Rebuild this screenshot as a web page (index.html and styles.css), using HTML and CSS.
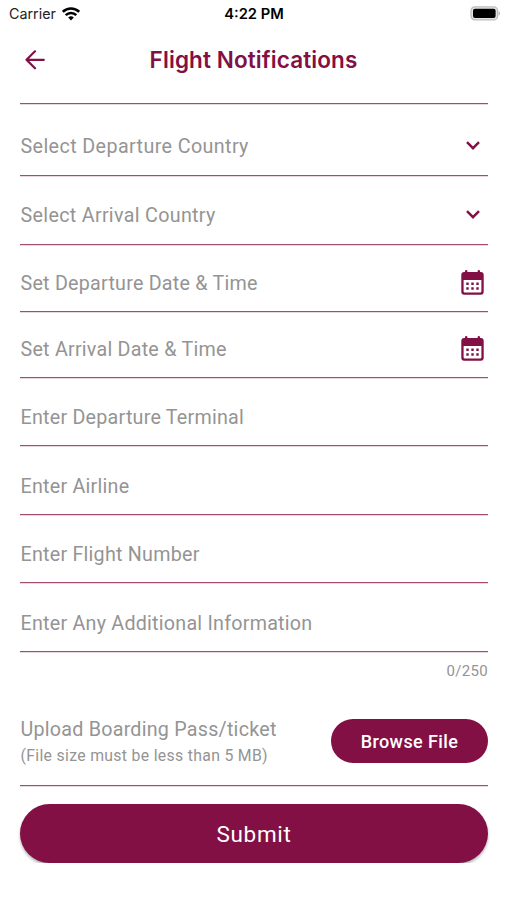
FILE: index.html
```html
<!DOCTYPE html>
<html lang="en">
<head>
  <meta charset="UTF-8">
  <meta name="viewport" content="width=device-width, initial-scale=1.0">
  <title>Flight Notifications</title>
  <link rel="stylesheet" href="styles.css">
</head>
<body>
  <div class="status-bar">
    <div class="carrier">
      <span>Carrier</span>
      <svg width="18" height="14" viewBox="0 0 18 14" fill="none" stroke="#000" stroke-width="2.6">
        <path d="M.8 4.800a11.800 11.800 0 0 1 16.400 0"/>
        <path d="M3.700 8.100a7.600 7.600 0 0 1 10.600 0"/>
        <path d="M9 13.400L6.200 10.600a4 4 0 0 1 5.600 0z" fill="#000" stroke="none"/>
      </svg>
    </div>
    <span class="time">4:22 PM</span>
    <svg class="battery" width="31" height="15" viewBox="0 0 31 15">
      <rect x="1" y="0.9" width="26.600" height="13" rx="4" fill="#e4e4e4" stroke="#bdbdbd" stroke-width="1.3"/>
      <rect x="3" y="2.800" width="22.600" height="9.200" rx="2" fill="#000"/>
      <path d="M28.600 5.200c1.900.7 1.900 3.700 0 4.400z" fill="#b5b5b5"/>
    </svg>
  </div>

  <header class="header">
    <svg class="back" width="20" height="20" viewBox="0 0 20 20" fill="none" stroke="#821045" stroke-width="2.200" stroke-linecap="round" stroke-linejoin="round">
      <path d="M18.800 9.800H1.500M10 1.300L1.500 9.800l8.500 8.500"/>
    </svg>
    <h1>Flight Notifications</h1>
  </header>

  <form class="form">
    <div class="field country">
      <span>Select Departure Country</span>
      <svg class="chevron" width="14" height="9" viewBox="0 0 14 9" fill="none" stroke="#821045" stroke-width="2.4"><path d="M1 1.200l6 6 6-6"/></svg>
    </div>
    <div class="field arrival">
      <span>Select Arrival Country</span>
      <svg class="chevron" width="14" height="9" viewBox="0 0 14 9" fill="none" stroke="#821045" stroke-width="2.4"><path d="M1 1.200l6 6 6-6"/></svg>
    </div>
    <div class="field date">
      <span>Set Departure Date &amp; Time</span>
      <svg class="calendar" width="23" height="25" viewBox="0 0 23 25">
        <path fill="#821045" fill-rule="evenodd" d="M4 2V1.200a1.200 1.200 0 0 1 2.400 0V2h10.200v-.8a1.200 1.200 0 0 1 2.400 0V2h.8A2.900 2.900 0 0 1 22.700 4.900v16.900a2.900 2.900 0 0 1-2.900 2.900H3.200A2.900 2.900 0 0 1 .3 21.800V4.900A2.900 2.900 0 0 1 3.200 2zM2.600 10v11.200q0 1.200 1.200 1.200h15.400q1.200 0 1.200-1.200V10z"/>
        <path fill="#821045" d="M5.300 12.500h2.400v2.400H5.300zM10.300 12.500h2.400v2.400h-2.400zM15.300 12.500h2.400v2.400h-2.400zM5.300 17.300h2.400v2.400H5.300zM10.300 17.300h2.400v2.400h-2.400zM15.300 17.300h2.400v2.400h-2.400z"/>
      </svg>
    </div>
    <div class="field date arrival-date">
      <span>Set Arrival Date &amp; Time</span>
      <svg class="calendar" width="23" height="25" viewBox="0 0 23 25">
        <path fill="#821045" fill-rule="evenodd" d="M4 2V1.200a1.200 1.200 0 0 1 2.400 0V2h10.200v-.8a1.200 1.200 0 0 1 2.400 0V2h.8A2.900 2.900 0 0 1 22.700 4.900v16.900a2.900 2.900 0 0 1-2.900 2.900H3.200A2.900 2.900 0 0 1 .3 21.800V4.900A2.900 2.900 0 0 1 3.200 2zM2.600 10v11.200q0 1.200 1.200 1.200h15.400q1.200 0 1.200-1.200V10z"/>
        <path fill="#821045" d="M5.300 12.500h2.400v2.400H5.300zM10.300 12.500h2.400v2.400h-2.400zM15.300 12.500h2.400v2.400h-2.400zM5.300 17.300h2.400v2.400H5.300zM10.300 17.300h2.400v2.400h-2.400zM15.300 17.300h2.400v2.400h-2.400z"/>
      </svg>
    </div>
    <div class="field terminal"><span>Enter Departure Terminal</span></div>
    <div class="field"><span>Enter Airline</span></div>
    <div class="field terminal"><span>Enter Flight Number</span></div>
    <div class="field"><span>Enter Any Additional Information</span></div>
    <div class="counter">0/250</div>

    <div class="upload">
      <div class="upload-text">
        <p class="upload-title">Upload Boarding Pass/ticket</p>
        <p class="upload-note">(File size must be less than 5 MB)</p>
      </div>
      <button type="button" class="browse">Browse File</button>
    </div>

    <button type="button" class="submit">Submit</button>
  </form>
</body>
</html>
```
FILE: styles.css
```css
* {
  box-sizing: border-box;
}
body {
  margin: 0;
  background-color: #fff;
  font-family: Roboto, sans-serif;
  color: #949494;
}
h1, p {
  margin: 0;
}
svg {
  display: block;
}

/* Status bar */
.status-bar {
  display: grid;
  grid-template-columns: 1fr auto 1fr;
  align-items: center;
  height: 27px;
  padding: 0 6px 0 9px;
  font-family: Inter, sans-serif;
  font-size: 14.3px;
  color: #222;
}
.carrier {
  display: flex;
  align-items: center;
  gap: 6px;
}
.time {
  margin-right: 2px;
  font-size: 14.7px;
  font-weight: 600;
  color: #000;
}
.battery {
  justify-self: end;
}

/* Header */
.header {
  display: grid;
  grid-template-columns: 20px 1fr 20px;
  align-items: center;
  height: 77px;
  margin: 0 19px 0 20px;
  padding: 0 5px 11px;
  border-bottom: 1px solid #a34c6f;
  box-shadow: 0 1px #ecd7e0;
}
.header h1 {
  margin-right: 1px;
  font-family: Inter, sans-serif;
  font-size: 22.5px;
  font-weight: 600;
  letter-spacing: 0.1px;
  text-align: center;
  color: #821045;
}

/* Form rows */
.form {
  padding: 0 19px 0 20px;
}
.field {
  display: flex;
  justify-content: space-between;
  align-items: flex-end;
  height: 69px;
  padding: 0 0 15px 0.5px;
  border-bottom: 1px solid #a34c6f;
  box-shadow: 0 1px #ecd7e0;
  font-size: 19.7px;
  line-height: 24px;
  letter-spacing: 0.24px;
}
.field.country {
  height: 72px;
  padding-bottom: 16px;
  letter-spacing: 0.4px;
}
.field.arrival {
  padding-bottom: 16px;
  letter-spacing: 0.32px;
}
.field.date {
  height: 67px;
}
.field.arrival-date {
  height: 66px;
}
.field.terminal {
  height: 68px;
}
.chevron {
  margin: 0 8px 9px 0;
}
.calendar {
  margin: 0 4px 1px 0;
}
.counter {
  padding-top: 10px;
  font-size: 15px;
  line-height: 18px;
  letter-spacing: 0.3px;
  text-align: right;
}

/* Boarding pass upload */
.upload {
  display: flex;
  justify-content: space-between;
  align-items: center;
  height: 106px;
  padding: 19px 0 0 0.5px;
  border-bottom: 1px solid #a34c6f;
  box-shadow: 0 1px #ecd7e0;
}
.upload-title {
  font-size: 19.7px;
  line-height: 26px;
  letter-spacing: 0.24px;
}
.upload-note {
  font-size: 15.8px;
  line-height: 25px;
  letter-spacing: 0.32px;
}
button {
  border: none;
  background-color: #821045;
  color: #fff;
  font-family: Roboto, sans-serif;
  cursor: pointer;
}
.browse {
  width: 157px;
  height: 44px;
  margin-top: -2px;
  border-radius: 22px;
  font-size: 18px;
  font-weight: 500;
  letter-spacing: 0.4px;
}
.submit {
  display: block;
  width: 100%;
  height: 59px;
  margin-top: 18px;
  border-radius: 30px;
  box-shadow: 0 2px 3px rgba(0, 0, 0, 0.3);
  font-size: 22.5px;
  letter-spacing: 0.7px;
}
```
